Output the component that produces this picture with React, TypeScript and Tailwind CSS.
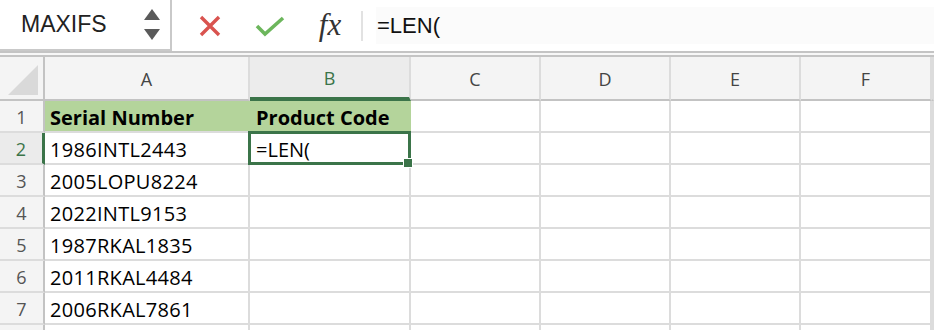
import { Fragment } from 'react';

const cols = ['A', 'B', 'C', 'D', 'E', 'F', ''];

const rows: [string, string][] = [
  ['Serial Number', 'Product Code'],
  ['1986INTL2443', '=LEN('],
  ['2005LOPU8224', ''],
  ['2022INTL9153', ''],
  ['1987RKAL1835', ''],
  ['2011RKAL4484', ''],
  ['2006RKAL7861', ''],
  ['', ''],
];

function NameBox() {
  return (
    <div className="flex h-[51px] w-[172px] items-center justify-between border-r-2 border-b-2 border-[#c9c9c9] pl-[21px] pr-[10px]">
      <span className="font-['Liberation_Sans',sans-serif] text-[23px] text-[#222]">MAXIFS</span>
      <div className="flex flex-col gap-[9px]">
        <svg width="16" height="11" viewBox="0 0 16 11">
          <polygon points="8,0 16,11 0,11" fill="#5a5a5a" />
        </svg>
        <svg width="16" height="11" viewBox="0 0 16 11">
          <polygon points="0,0 16,0 8,11" fill="#5a5a5a" />
        </svg>
      </div>
    </div>
  );
}

function FormulaBar() {
  return (
    <div className="flex h-[51px] flex-1 items-center">
      <div className="flex w-[76px] justify-center">
        <svg width="22" height="22" viewBox="0 0 22 22">
          <path d="M2 2 L20 20 M20 2 L2 20" stroke="#d9534f" strokeWidth="3.4" />
        </svg>
      </div>
      <div className="flex w-[43px] justify-center">
        <svg width="30" height="22" viewBox="0 0 30 22">
          <path d="M2 11 L10 19 L28 3" stroke="#6cb65c" strokeWidth="3.6" fill="none" />
        </svg>
      </div>
      <div className="flex w-[70px] justify-center pb-[3px] pl-[8px]">
        <span className="font-['Liberation_Serif',serif] text-[31px] italic leading-none text-[#333]">fx</span>
      </div>
      <div className="h-[30px] w-[2px] bg-[#e2e2e2]" />
      <div className="ml-[13px] flex h-[37px] flex-1 items-center bg-[#fbfbfb] pl-[1px]">
        <span className="font-['Liberation_Sans',sans-serif] text-[22px] text-[#111]">=LEN(</span>
      </div>
    </div>
  );
}

export default function App() {
  return (
    <div className="h-[330px] w-[934px] overflow-hidden bg-white font-['Open_Sans',sans-serif]">
      <div className="flex">
        <NameBox />
        <FormulaBar />
      </div>
      <div className="h-[6px] border-t-2 border-b-2 border-[#c4c4c4] bg-[#f7f7f7]" />

      <div className="grid grid-cols-[45px_205px_161px_130px_130px_130px_131px_1fr]">
        {/* corner */}
        <div className="flex h-[44px] items-end justify-end border-r-2 border-b-2 border-[#c3c3c3] bg-[#f4f4f4] pb-[4px] pr-[5px]">
          <svg width="30" height="30" viewBox="0 0 30 30">
            <polygon points="30,0 30,30 0,30" fill="#d9d9d9" />
          </svg>
        </div>
        {cols.map((c) =>
          c === 'B' ? (
            <div
              key="B"
              className="flex h-[44px] items-center justify-center border-r-2 border-b-[4px] border-r-[#dcdcdc] border-b-[#3b7449] bg-[#ececec] pt-[3px] text-[18px] text-[#3b7449]"
            >
              B
            </div>
          ) : (
            <div
              key={c || 'g'}
              className="flex h-[44px] items-center justify-center border-r-2 border-b-2 border-r-[#dcdcdc] border-b-[#c3c3c3] bg-[#f4f4f4] pt-[3px] text-[18px] text-[#444]"
            >
              {c}
            </div>
          )
        )}

        {rows.map((r, i) => {
          const n = i + 1;
          const active = n === 2;
          const label = n < 8 ? n : '';
          return (
            <Fragment key={n}>
              <div
                className={
                  active
                    ? 'flex h-[32px] items-center justify-center border-r-[3px] border-b-2 border-r-[#3b7449] border-b-[#dcdcdc] bg-[#ebebeb] pt-[3px] text-[18px] text-[#3b7449]'
                    : 'flex h-[32px] items-center justify-center border-r-2 border-b-2 border-r-[#c3c3c3] border-b-[#dcdcdc] bg-[#f4f4f4] pt-[3px] text-[18px] text-[#555]'
                }
              >
                {label}
              </div>
              <div
                className={
                  n === 1
                    ? 'flex h-[32px] items-center border-b-2 border-[#dcdcdc] bg-[#b4d49b] pl-[5px] pt-[3px] text-[20px] font-bold text-black'
                    : 'flex h-[32px] items-center border-r-2 border-b-2 border-[#dcdcdc] pl-[5px] pt-[3px] text-[20px] tracking-[0.3px] text-black'
                }
              >
                {r[0]}
              </div>
              {n === 1 ? (
                <div className="flex h-[32px] items-center border-b-2 border-[#dcdcdc] bg-[#b4d49b] pl-[6px] pt-[3px] text-[20px] font-bold text-black">
                  {r[1]}
                </div>
              ) : active ? (
                <div className="relative h-[32px] border-r-2 border-b-2 border-[#dcdcdc]">
                  <div className="absolute -top-[2px] -left-[2px] right-[-2px] bottom-[-2px] flex items-center border-[3px] border-[#3b7449] pl-[5px] pt-[3px] text-[20px] text-black">
                    {r[1]}
                  </div>
                  <div className="absolute -right-[4px] -bottom-[5px] box-content h-[8px] w-[8px] border border-white bg-[#3b7449]" />
                </div>
              ) : (
                <div className="h-[32px] border-r-2 border-b-2 border-[#dcdcdc]" />
              )}
              {[0, 1, 2, 3, 4].map((k) => (
                <div key={k} className="h-[32px] border-r-2 border-b-2 border-[#dcdcdc]" />
              ))}
            </Fragment>
          );
        })}
      </div>
    </div>
  );
}
